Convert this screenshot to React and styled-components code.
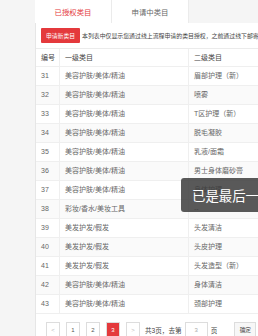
import React from 'react';
import styled, { createGlobalStyle } from 'styled-components';

const GlobalStyle = createGlobalStyle`
  body {
    margin: 0;
    background: #f5f5f5;
    font-family: Arial, "Liberation Sans", "Noto Sans CJK SC", sans-serif;
    overflow: hidden;
  }
`

const Page = styled.div`
  position: relative;
  padding-left: 35px;
  width: 330px;
`

const Tabs = styled.div`
  display: flex;
  height: 23px;
  background: #f5f5f5;
`

const Tab = styled.div`
  width: 76px;
  display: flex;
  align-items: center;
  justify-content: center;
  background: #fff;
  border-right: 1px solid #ebebeb;
  font-size: 7.4px;
  color: ${p => (p.$active ? '#e4393c' : '#666')};
`

const Panel = styled.div`
  background: #fff;
  border-left: 1px solid #e6e6e6;
`

const Toolbar = styled.div`
  display: flex;
  align-items: center;
  gap: 2px;
  height: 25px;
  padding-left: 5px;
  border-bottom: 1px solid #ebebeb;
  white-space: nowrap;
`

const RedButton = styled.button`
  width: 39px;
  height: 15px;
  padding: 0;
  border: none;
  border-radius: 1px;
  background: #e4393c;
  color: #fff;
  font-family: inherit;
  font-size: 5.8px;
`

const Note = styled.span`
  font-size: 5.9px;
  color: #444;
`

const Table = styled.table`
  border-collapse: collapse;
  width: 290px;
  font-size: 7px;
  line-height: 10px;
  color: #666;
`

const Cell = styled.td`
  height: 18px;
  padding: 0 0 0 5px;
  border-bottom: 1px solid #efefef;
  border-right: 1px solid #efefef;
  text-align: left;
  white-space: nowrap;
  width: ${p => p.$w || 'auto'};
`

const Head = styled(Cell).attrs({ as: 'th' })`
  height: 17px;
  font-weight: normal;
  color: #444;
`

const Row = styled.tr`
  height: 19px;
  background: ${p => (p.$even ? '#fafafa' : '#fff')};
`

const Pager = styled.div`
  display: flex;
  align-items: center;
  gap: 6px;
  padding: 8px 0 10px 10px;
  font-size: 6.6px;
  color: #444;
`

const PageBtn = styled.div`
  width: 14px;
  height: 15px;
  display: flex;
  align-items: center;
  justify-content: center;
  border: 1px solid #ddd;
  box-sizing: border-box;
  background: ${p => (p.$active ? '#e4393c' : '#fff')};
  color: ${p => (p.$active ? '#fff' : p.$muted ? '#bbb' : '#555')};
  font-size: 6px;
`

const Jump = styled.span`
  display: flex;
  align-items: center;
  gap: 3px;
  margin-left: -1px;
`

const Input = styled.div`
  width: 23px;
  height: 15px;
  box-sizing: border-box;
  border: 1px solid #ddd;
  display: flex;
  align-items: center;
  justify-content: center;
  color: #aaa;
  font-size: 6px;
`

const Confirm = styled.div`
  width: 22px;
  height: 15px;
  box-sizing: border-box;
  margin-left: 11px;
  border: 1px solid #ddd;
  background: #f7f7f7;
  display: flex;
  align-items: center;
  justify-content: center;
  font-size: 5.6px;
  color: #444;
`

const Toast = styled.div`
  position: absolute;
  left: 181px;
  top: 178px;
  height: 34px;
  padding: 0 11px;
  display: flex;
  align-items: center;
  border-radius: 3px;
  background: rgba(60, 60, 60, 0.85);
  color: #fff;
  font-size: 13.4px;
  white-space: nowrap;
`

const beauty = '美容护肤/美体/精油'
const hair = '美发护发/假发'

const rows = [
  [31, beauty, '眉部护理（新）'],
  [32, beauty, '喷雾'],
  [33, beauty, 'T区护理（新）'],
  [34, beauty, '脱毛凝胶'],
  [35, beauty, '乳液/面霜'],
  [36, beauty, '男士身体磨砂膏'],
  [37, beauty, '身体护理'],
  [38, '彩妆/香水/美妆工具', '--'],
  [39, hair, '头发清洁'],
  [40, hair, '头皮护理'],
  [41, hair, '头发造型（新）'],
  [42, beauty, '身体清洁'],
  [43, beauty, '颈部护理'],
]

export default function App() {
  return (
    <Page>
      <GlobalStyle />
      <Tabs>
        <Tab $active>已授权类目</Tab>
        <Tab>申请中类目</Tab>
      </Tabs>
      <Panel>
        <Toolbar>
          <RedButton>申请新类目</RedButton>
          <Note>本列表中仅显示您通过线上流程申请的类目授权，之前通过线下邮寄协议申请的类目不在此显示</Note>
        </Toolbar>
        <Table>
          <thead>
            <tr>
              <Head $w="18px">编号</Head>
              <Head $w="123px">一级类目</Head>
              <Head>二级类目</Head>
            </tr>
          </thead>
          <tbody>
            {rows.map(([id, first, second], i) => (
              <Row key={id} $even={i % 2 === 1}>
                <Cell>{id}</Cell>
                <Cell>{first}</Cell>
                <Cell>{second}</Cell>
              </Row>
            ))}
          </tbody>
        </Table>
        <Pager>
          <PageBtn $muted>&lt;</PageBtn>
          <PageBtn>1</PageBtn>
          <PageBtn>2</PageBtn>
          <PageBtn $active>3</PageBtn>
          <PageBtn $muted>&gt;</PageBtn>
          <Jump>
            共3页，去第
            <Input>3</Input>
            页
          </Jump>
          <Confirm>确定</Confirm>
        </Pager>
      </Panel>
      <Toast>已是最后一张</Toast>
    </Page>
  );
}
